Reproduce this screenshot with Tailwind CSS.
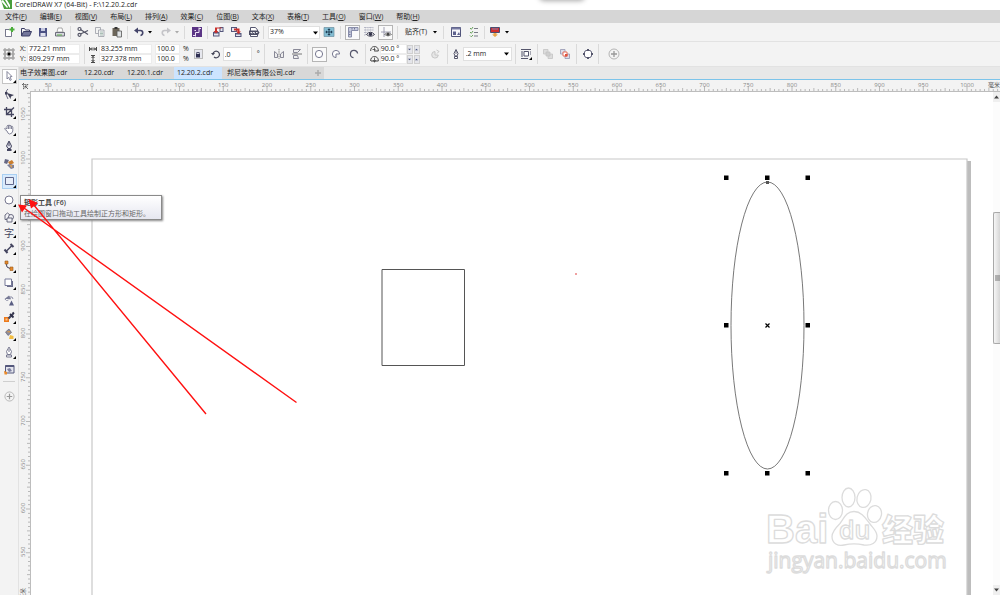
<!DOCTYPE html>
<html lang="zh-CN">
<head>
    <meta charset="UTF-8">
    <meta name="viewport" content="width=device-width, initial-scale=1.0">
    <title>CorelDRAW X7 (64-Bit) - F:\12.20.2.cdr</title>
    <script src="https://cdn.jsdelivr.net/npm/@tailwindcss/browser@4"></script>
</head>
<body class="h-screen overflow-hidden flex flex-col relative bg-white text-[7px] leading-[10px] text-[#222] font-['Open_Sans','Noto_Sans_CJK_SC',sans-serif]">

    <!-- Title bar -->
    <header class="h-[10px] shrink-0 flex items-center gap-[3px] overflow-hidden relative">
        <svg class="w-3 h-[10px] shrink-0" viewBox="0 0 12 10"><path fill="#4a9e3c" d="M1 0h11v9H4z"/><path fill="#fff" d="M3 0l5 7-1 1-6-7zM7 0l3 5 0 3-1-1-4-7z"/></svg>
        <h1>CorelDRAW X7 (64-Bit) - F:\12.20.2.cdr</h1>
        <div class="absolute left-[54%] -top-2 w-11 h-2 rounded shadow-[0_0_5px_1px_#aaa]"></div>
    </header>

    <!-- Menu bar -->
    <nav class="h-[13px] shrink-0 flex items-center gap-[13px] pl-[5px] bg-[#d6d6d6] whitespace-nowrap">
        <button>文件(<u>F</u>)</button>
        <button>编辑(<u>E</u>)</button>
        <button>视图(<u>V</u>)</button>
        <button>布局(<u>L</u>)</button>
        <button>排列(<u>A</u>)</button>
        <button>效果(<u>C</u>)</button>
        <button>位图(<u>B</u>)</button>
        <button>文本(<u>X</u>)</button>
        <button>表格(<u>T</u>)</button>
        <button>工具(<u>O</u>)</button>
        <button>窗口(<u>W</u>)</button>
        <button>帮助(<u>H</u>)</button>
    </nav>

    <!-- Standard toolbar -->
    <div class="h-[19px] shrink-0 flex items-center bg-[#f3f3f3] border-b border-[#e2e2e2]">
        <button aria-label="新建" class="w-[17px] flex justify-center"><svg class="size-3" viewBox="0 0 12 12"><path d="M2.500 3.500h4M2.500 3v7.500h6V6" fill="#fff" stroke="#77788c"/><path d="M9 1v5M6.500 3.500h5" stroke="#4cae3a" stroke-width="2"/></svg></button>
        <button aria-label="打开" class="w-[17px] flex justify-center"><svg class="size-3" viewBox="0 0 12 12"><path d="M1.500 10V2.500h3l1 1.500h4v1.500" fill="none" stroke="#3c3e66"/><path d="M3.500 5.500h8L9.500 10h-8z" fill="#74779b" stroke="#3c3e66"/></svg></button>
        <button aria-label="保存" class="w-[17px] flex justify-center"><svg class="size-3" viewBox="0 0 12 12"><path d="M2 2h8v8.500H2z" fill="#4b5184"/><path d="M4 2h4v3H4z" fill="#c5c9e0"/><path d="M3.500 7h5v3h-5z" fill="#dfe1ee"/></svg></button>
        <button aria-label="打印" class="w-[17px] flex justify-center"><svg class="size-3" viewBox="0 0 12 12"><path d="M4 2h4l1 4H3z" fill="#fff" stroke="#888" stroke-width=".7"/><path d="M1.500 6.500h9v3.500h-9z" fill="#d5d6dc" stroke="#606170" stroke-width=".9"/><path d="M3 9h5" stroke="#5cb04a"/></svg></button>
        <div class="w-px h-[13px] ml-[2px] mr-[3px] bg-[#dadada]"></div>
        <button aria-label="剪切" class="w-[17px] flex justify-center"><svg class="size-3" viewBox="0 0 12 12"><g fill="none" stroke="#555667" stroke-width="1.200"><path d="M3.500 8l7.500-3.500M3.500 3.500l7.500 5"/><circle cx="2.500" cy="3" r="1.500"/><circle cx="2.500" cy="8.800" r="1.500"/></g></svg></button>
        <button aria-label="复制" class="w-[17px] flex justify-center"><svg class="size-3" viewBox="0 0 12 12"><g fill="#f2f3f3" stroke="#9a9da6" stroke-width=".8"><path d="M1.500 1.500h5v6h-5z"/><path d="M4.500 4h5.500v6.500H4.500z"/></g><path d="M6 6h3M6 7.500h3M6 9h3" stroke="#8ba79b" stroke-width=".7"/></svg></button>
        <button aria-label="粘贴" class="w-[17px] flex justify-center"><svg class="size-3" viewBox="0 0 12 12"><path d="M1.500 2h7v8h-7z" fill="#6c6559"/><path d="M3.500 1h3v2h-3z" fill="#333"/><path d="M6 5h4.500v6H6z" fill="#e0e3e5" stroke="#555" stroke-width=".8"/></svg></button>
        <div class="w-px h-[13px] mx-[2px] bg-[#dadada]"></div>
        <button aria-label="撤消" class="w-[17px] flex justify-center"><svg class="size-3" viewBox="0 0 12 12"><path d="M1 4.500L5 1.500v6z" fill="#44456a"/><path d="M4 4.500h3.500c3 0 3 4.500 0 5" fill="none" stroke="#44456a" stroke-width="1.600"/></svg></button>
        <button aria-label="撤消列表" class="w-[6px] flex justify-center"><svg class="w-1 h-1" viewBox="0 0 4 4"><path d="M0 1h4L2 3.500z"/></svg></button>
        <button aria-label="重做" class="w-[17px] ml-[4px] flex justify-center"><svg class="size-3" viewBox="0 0 12 12"><path d="M11 4.500L7 1.500v6z" fill="#c4c4c8"/><path d="M8 4.500H4.500c-3 0-3 4.500 0 5" fill="none" stroke="#c4c4c8" stroke-width="1.600"/></svg></button>
        <button aria-label="重做列表" class="w-[6px] flex justify-center"><svg class="w-1 h-1" viewBox="0 0 4 4"><path fill="#aaa" d="M0 1h4L2 3.500z"/></svg></button>
        <div class="w-px h-[13px] ml-[4px] mr-[3px] bg-[#dadada]"></div>
        <button aria-label="搜索内容" class="w-[17px] flex justify-center"><svg class="size-3" viewBox="0 0 12 12"><path d="M1 1h10v10H1z" fill="#5b3585"/><path d="M8 1.500v5H4.500V10.500M8 2.500h2M4 9.500H2M5 4.500H3.500" fill="none" stroke="#eee4f6"/></svg></button>
        <div class="w-px h-[13px] ml-[2px] mr-px bg-[#dadada]"></div>
        <button aria-label="导入" class="w-[18px] flex justify-center"><svg class="size-3" viewBox="0 0 12 12"><path d="M1 6h6.500v4.500H1zM7.500 1h4v5h-4z" fill="#55577b"/><path d="M2 7.500h4.500v2H2zM8.500 2h2v3h-2z" fill="#e6e6ef"/><path d="M9.500 2.500H5V5H6.500L4 7.500 1.500 5H3V1.500h6.500z" fill="#c9302c"/></svg></button>
        <button aria-label="导出" class="w-[18px] flex justify-center"><svg class="size-3" viewBox="0 0 12 12"><path d="M1 1h6v5H1zM5 7h6.500v4H5z" fill="#55577b"/><path d="M2 2h4v3H2zM6 8.500h4.500V10H6z" fill="#e6e6ef"/><path d="M4 2.500h5.500V5.500H11L8.500 8 6 5.500h1.500v-1H4z" fill="#c9302c"/></svg></button>
        <button aria-label="发布为 PDF" class="w-[18px] flex justify-center"><svg class="size-3" viewBox="0 0 12 12"><path d="M2.500 1.500h5l2 2.500v6.500h-7z" fill="#fff" stroke="#55566f"/><path d="M1 4.500h9l1.500 2L10 9H1z" fill="#4c4d63"/><path d="M2.500 6.500h1.500v1M5 6.500h1.500v1M8 6.500h1.500" stroke="#fff" stroke-width=".9" fill="none"/></svg></button>
        <div class="w-px h-[13px] mr-[4px] bg-[#dadada]"></div>
        <div class="relative w-[52px]">
            <select aria-label="缩放级别" class="block w-full h-[13px] pl-px appearance-none bg-white border border-[#e0e0e0]"><option>37%</option></select>
            <svg class="absolute right-[2px] top-[5px] w-[5px] h-1 pointer-events-none" viewBox="0 0 5 4"><path d="M0 .5h5L2.500 3.500z"/></svg>
        </div>
        <button aria-label="全屏预览" class="w-[18px] flex justify-center"><svg class="size-3" viewBox="0 0 12 12"><path d="M1 1.500h10v9H1z" fill="#83bdd3" stroke="#6d8f9f" stroke-width=".7"/><path d="M6 2.500v7M2.500 6h7M4.800 3.500h2.400M4.800 8.500h2.400M3.500 4.800v2.400M8.500 4.800v2.400" stroke="#1f3f55"/></svg></button>
        <div class="w-px h-[13px] ml-[2px] mr-[4px] bg-[#dadada]"></div>
        <button aria-label="显示标尺" class="w-[15px] h-[15px] flex items-center justify-center bg-[#fafafa] border border-[#b5b5b5]"><svg class="size-3 shrink-0" viewBox="0 0 12 12"><path d="M1.500 1.500h9.500v3H4.500V11h-3z" fill="#c6cadd" stroke="#7e83a3" stroke-width=".9"/><path d="M5 2v1.500M7.500 2v1.500M2 6h1.500M2 8.500h1.500" stroke="#4f5378" stroke-width=".7"/></svg></button>
        <button aria-label="显示网格" class="w-[18px] flex justify-center"><svg class="size-3" viewBox="0 0 12 12"><path d="M1 1.500h9M1 4h9M1 6.500h5M1 9h2M2.500 1v8M5 1v5M7.500 1v4M10 1v4" stroke="#9ea0b5" stroke-width=".7" stroke-dasharray="1 .7"/><path d="M3.500 8.500Q7.500 4 11.500 8.500 7.500 12 3.500 8.500z" fill="#fff" stroke="#3d3e50"/><circle cx="7.500" cy="8.200" r="1.700" fill="#33344a"/></svg></button>
        <button aria-label="显示辅助线" class="w-[15px] h-[15px] flex items-center justify-center bg-[#fafafa] border border-[#b5b5b5]"><svg class="size-3 shrink-0" viewBox="0 0 12 12"><path d="M4 1v10M1 6h10" stroke="#8a8ca2" stroke-width=".8"/><path d="M4.500 8.500Q8 5 11.500 8.500 8 11.500 4.500 8.500z" fill="#fff" stroke="#666" stroke-width=".8"/><circle cx="8" cy="8.300" r="1.500" fill="#444"/></svg></button>
        <div class="w-px h-[13px] ml-[4px] mr-[7px] bg-[#dadada]"></div>
        <button class="flex items-center gap-[6px] whitespace-nowrap">贴齐(T)<svg class="w-1 h-1" viewBox="0 0 4 4"><path d="M0 1h4L2 3.500z"/></svg></button>
        <div class="w-px h-[13px] ml-[6px] mr-[3px] bg-[#dadada]"></div>
        <button aria-label="选项" class="w-[18px] flex justify-center"><svg class="size-3" viewBox="0 0 12 12"><path d="M1.500 1.500h9v9h-9z" fill="#f6f6fb" stroke="#51547a"/><path d="M1.500 1.500h9v2h-9z" fill="#777aa2"/><path d="M3 9V5.500h3V9zM7 9l2-3 1 3z" fill="#5d618d"/></svg></button>
        <button aria-label="应用程序启动器" class="w-[18px] flex justify-center"><svg class="size-3" viewBox="0 0 12 12"><path d="M6 2.500h4M6 6.500h4M6 10h4" stroke="#7b7d88" stroke-width="1.200"/><path d="M2 2l1.300 1.300L5 1M2 6l1.300 1.300L5 5M2 9.500l1.300 1.300L5 9" fill="none" stroke="#69a15c"/></svg></button>
        <div class="w-px h-[13px] ml-[1px] mr-[2px] bg-[#dadada]"></div>
        <button aria-label="启动" class="w-[17px] flex justify-center"><svg class="size-3" viewBox="0 0 12 12"><path d="M1.500 1.500h9v5h-9z" fill="#d02c2c" stroke="#4c4d70"/><path d="M3 3h6" stroke="#8186b4"/><path d="M4.500 7h3v1.500h1.500L6 11 3 8.500h1.500z" fill="#e9a64b"/></svg></button>
        <button aria-label="启动列表" class="w-[7px] flex justify-center"><svg class="w-1 h-1" viewBox="0 0 4 4"><path d="M0 1h4L2 3.500z"/></svg></button>
    </div>

    <!-- Property bar -->
    <div class="h-[25px] shrink-0 flex items-center bg-[#f3f3f3] border-b border-[#e2e2e2]">
        <button aria-label="对象原点" class="w-[17px] flex justify-center"><svg class="size-3" viewBox="0 0 12 12"><path d="M2 2h8v8H2z" fill="none" stroke="#999" stroke-width=".7"/><g fill="#fff" stroke="#777" stroke-width=".8"><path d="M1 1h2v2H1zM5 1h2v2H5zM9 1h2v2H9zM1 5h2v2H1zM9 5h2v2H9zM1 9h2v2H1zM5 9h2v2H5zM9 9h2v2H9z"/></g><path d="M4.500 4.500h3v3h-3z"/></svg></button>
        <div class="ml-[3px] grid">
            <label class="flex items-center gap-[1px]">X:<input value="772.21 mm" class="w-[53px] h-[10px] pl-[1px] bg-white border border-[#ececec]"></label>
            <label class="flex items-center gap-[1px]">Y:<input value="809.297 mm" class="w-[53px] h-[10px] pl-[1px] bg-white border border-[#ececec]"></label>
        </div>
        <div class="w-px h-5 mx-[4px] bg-[#dadada]"></div>
        <div class="grid">
            <label class="flex items-center gap-[2px]"><svg class="w-2 h-[8px]" viewBox="0 0 8 8"><path d="M.5 2v4M7.500 2v4M1 4h6M3 2.500L1.500 4 3 5.500M5 2.500L6.500 4 5 5.500" stroke="#333" fill="none" stroke-width=".9"/></svg><input aria-label="宽度" value="83.255 mm" class="w-[53px] h-[10px] pl-[1px] bg-white border border-[#ececec]"></label>
            <label class="flex items-center gap-[2px]"><svg class="w-2 h-[8px]" viewBox="0 0 8 8"><path d="M2 .5h4M2 7.500h4M4 1v6M2.500 3L4 1.500 5.500 3M2.500 5L4 6.500 5.500 5" stroke="#333" fill="none" stroke-width=".9"/></svg><input aria-label="高度" value="327.378 mm" class="w-[53px] h-[10px] pl-[1px] bg-white border border-[#ececec]"></label>
        </div>
        <div class="ml-[3px] grid">
            <label class="flex items-center gap-[3px]"><input aria-label="水平缩放" value="100.0" class="w-[25px] h-[10px] pl-[1px] bg-white border border-[#ececec]">%</label>
            <label class="flex items-center gap-[3px]"><input aria-label="垂直缩放" value="100.0" class="w-[25px] h-[10px] pl-[1px] bg-white border border-[#ececec]">%</label>
        </div>
        <button aria-label="锁定比率" class="ml-[5px] w-[9px] h-[10px] flex items-center justify-center bg-[#e6e7ee] border border-[#bbb]"><svg class="w-[6px] h-[7px] shrink-0" viewBox="0 0 6 7"><path d="M1 3h4v3.500H1z" fill="#2f3052"/><path d="M1.700 3V1.500h2.600V3" fill="none" stroke="#2f3052" stroke-width=".8"/></svg></button>
        <label class="ml-[8px] flex items-center gap-[2px]">
            <svg class="size-[10px]" viewBox="0 0 10 10"><path d="M2 4.500a3.300 3.300 0 1 1 1 3.500" fill="none" stroke="#444558" stroke-width="1.200"/><path d="M0 4h4L2 6.500z" fill="#444558"/></svg>
            <input aria-label="旋转角度" value=".0" class="w-[29px] h-[14px] pl-[1px] bg-white border border-[#e0e0e0]">
            <span class="pl-[3px]">°</span>
        </label>
        <div class="w-px h-5 ml-[4px] mr-[5px] bg-[#dadada]"></div>
        <button aria-label="水平镜像" class="w-[18px] flex justify-center"><svg class="size-3" viewBox="0 0 12 12"><path d="M6 1v10" stroke="#888" stroke-dasharray="1.500 .7"/><path d="M1.500 9.500V3.500l3 2.500v3.500zM10.500 9.500V3.500l-3 2.500v3.500z" fill="#eee" stroke="#6e6f80" stroke-width=".8"/></svg></button>
        <button aria-label="垂直镜像" class="w-[18px] flex justify-center"><svg class="size-3" viewBox="0 0 12 12"><path d="M1 6h10" stroke="#777"/><path d="M2.500 1.500h7l-3 3h-4zM2.500 10.500h5l-1-3h-4z" fill="#eee" stroke="#6e6f80" stroke-width=".8"/></svg></button>
        <div class="w-px h-5 ml-[1px] mr-[4px] bg-[#dadada]"></div>
        <button aria-label="椭圆形" class="w-[15px] h-[15px] flex items-center justify-center bg-[#fafafa] border border-[#b5b5b5]"><svg class="size-[10px]" viewBox="0 0 10 10"><circle cx="5" cy="5" r="3.600" fill="#fff" stroke="#777890"/></svg></button>
        <button aria-label="饼图" class="w-[18px] flex justify-center"><svg class="size-[10px]" viewBox="0 0 10 10"><path d="M5 5h3.600A3.600 3.600 0 1 0 5 8.600z" fill="#fff" stroke="#777890"/></svg></button>
        <button aria-label="弧" class="w-[18px] flex justify-center"><svg class="size-[10px]" viewBox="0 0 10 10"><path d="M8.600 4.500A3.600 3.600 0 1 0 4.500 8.600" fill="none" stroke="#55566c" stroke-width="1.200"/></svg></button>
        <div class="w-px h-5 ml-[2px] mr-[4px] bg-[#dadada]"></div>
        <div class="grid">
            <label class="flex items-center gap-[1px]"><svg class="w-[9px] h-[8px]" viewBox="0 0 9 8"><path d="M.7 6c-.5-6 8-6 7.600 0H5" fill="none" stroke="#444"/><path d="M4.500 2.500v4M2.500 4.500h3" stroke="#444" stroke-width=".8"/></svg><input aria-label="起始角度" value="90.0 °" class="w-[27px] h-[10px] bg-white border border-[#ececec]"></label>
            <label class="flex items-center gap-[1px]"><svg class="w-[9px] h-[8px]" viewBox="0 0 9 8"><path d="M.7 6c-.5-6 8-6 7.600 0H1" fill="none" stroke="#444"/><path d="M4.500 2.500v5M3 5l1.500 2L6 5" stroke="#444" stroke-width=".8" fill="none"/></svg><input aria-label="结束角度" value="90.0 °" class="w-[27px] h-[10px] bg-white border border-[#ececec]"></label>
        </div>
        <div class="grid grid-cols-2 gap-px">
            <button aria-label="减小起始角度" class="w-[6px] h-[9px] flex items-center justify-center bg-[#e4e5ea] border border-[#d0d0d0]"><svg class="w-[3px] h-[3px]" viewBox="0 0 4 4"><path fill="#44507c" d="M0 1h4L2 3z"/></svg></button>
            <button aria-label="增大起始角度" class="w-[6px] h-[9px] flex items-center justify-center bg-[#e4e5ea] border border-[#d0d0d0]"><svg class="w-[3px] h-[3px]" viewBox="0 0 4 4"><path fill="#44507c" d="M0 3h4L2 1z"/></svg></button>
            <button aria-label="减小结束角度" class="w-[6px] h-[9px] flex items-center justify-center bg-[#e4e5ea] border border-[#d0d0d0]"><svg class="w-[3px] h-[3px]" viewBox="0 0 4 4"><path fill="#44507c" d="M0 1h4L2 3z"/></svg></button>
            <button aria-label="增大结束角度" class="w-[6px] h-[9px] flex items-center justify-center bg-[#e4e5ea] border border-[#d0d0d0]"><svg class="w-[3px] h-[3px]" viewBox="0 0 4 4"><path fill="#44507c" d="M0 3h4L2 1z"/></svg></button>
        </div>
        <button aria-label="更改方向" class="ml-[6px] w-[18px] flex justify-center"><svg class="size-[10px]" viewBox="0 0 10 10"><path d="M5 2.500A3.300 3.300 0 1 0 8.300 6H5z" fill="#e6e6e6" stroke="#c6c6c6"/><path d="M6.500 1l2.500 1.500L7 4.500" fill="none" stroke="#c6c6c6"/></svg></button>
        <div class="w-px h-5 mx-[3px] bg-[#dadada]"></div>
        <label class="flex items-center gap-[2px] relative">
            <svg class="size-[10px]" viewBox="0 0 10 10"><path d="M5 .5L3 4.500 4 7h2l1-2.500zM3.500 7.500h3v2h-3z" fill="#fff" stroke="#44455c" stroke-width=".9"/><path d="M5 2v3" stroke="#44455c" stroke-width=".8"/></svg>
            <select aria-label="轮廓宽度" class="w-[49px] h-[14px] pl-[2px] appearance-none bg-white border border-[#e0e0e0]"><option>.2 mm</option></select>
            <svg class="absolute right-[3px] top-[5px] w-[5px] h-1 pointer-events-none" viewBox="0 0 5 4"><path d="M0 .5h5L2.500 3.500z"/></svg>
        </label>
        <div class="w-px h-5 ml-[3px] mr-[2px] bg-[#dadada]"></div>
        <button aria-label="文本换行" class="w-[17px] flex justify-center"><svg class="size-3" viewBox="0 0 12 12"><path d="M1 1.500h10M1 4h2M1 6h2M1 8h2M1 10.500h7M10 4h1M10 6h1" stroke="#55566c"/><path d="M4 3.500h4.500v4.500H4z" fill="#fff" stroke="#55566c"/><path d="M12 9v3H9z"/></svg></button>
        <div class="w-px h-5 ml-[2px] mr-px bg-[#dadada]"></div>
        <button aria-label="到图层前面" class="w-[18px] flex justify-center"><svg class="size-3" viewBox="0 0 12 12"><g fill="#dcdcdc" stroke="#c4c4c4" stroke-width=".8"><path d="M1.500 1.500h4.500v4.500H1.500zM6 6h4.500v4.500H6z"/><path fill="#cfcfcf" d="M4 4h4v4H4z"/></g></svg></button>
        <button aria-label="到图层后面" class="w-[17px] flex justify-center"><svg class="size-3" viewBox="0 0 12 12"><g fill="#dcdde9" stroke="#9496b0" stroke-width=".8"><path d="M1.500 1.500h4.500v4.500H1.500zM6 6h4.500v4.500H6z"/><path fill="#fff" stroke="#e2513b" d="M4 4h4v4H4z"/></g><path d="M6 6h2.500v2.500H6z" fill="#e2513b"/></svg></button>
        <div class="w-px h-5 mx-[2px] bg-[#dadada]"></div>
        <button aria-label="转换为曲线" class="w-[18px] flex justify-center"><svg class="size-3" viewBox="0 0 12 12"><circle cx="6" cy="6" r="4" fill="#fff" stroke="#66677e"/><path d="M5 1h2v2H5zM5 9h2v2H5zM1 5h2v2H1zM9 5h2v2H9z" fill="#55566c"/></svg></button>
        <div class="w-px h-5 ml-[1px] mr-[6px] bg-[#dadada]"></div>
        <button aria-label="快速自定义" class="w-[18px] flex justify-center"><svg class="size-3" viewBox="0 0 12 12"><circle cx="6" cy="6" r="5" fill="none" stroke="#b5b5b5"/><path d="M6 3v6M3 6h6" stroke="#999" stroke-width="1.300"/></svg></button>
    </div>

    <div class="flex-1 min-h-0 flex">
        <!-- Toolbox -->
        <aside class="w-[19px] shrink-0 bg-[#f3f3f3] border-r border-[#e2e2e2]">
            <div class="h-[311px] grid place-items-center">
                <button aria-label="选择工具" class="w-[15px] h-[15px] flex items-center justify-center bg-white border border-[#c4c4c4]"><svg class="size-[13px] shrink-0" viewBox="0 0 13 13"><path d="M4 1.500l5 5-2 .3 1.300 3-1.300.6-1.300-3L4 9z" fill="#fff" stroke="#777890" stroke-width=".9"/><path d="M13 10v3h-3z"/></svg></button>
                <button aria-label="形状工具" class="w-[15px] flex justify-center"><svg class="size-[13px]" viewBox="0 0 13 13"><path d="M5 1Q1 4 5 11" fill="none" stroke="#666780"/><path d="M4 5l7 2-3 1.500L7.500 11z" fill="#3f4058"/><path d="M2 4h2.500v2.500H2z" fill="#3f4058"/><path d="M13 10v3h-3z"/></svg></button>
                <button aria-label="裁剪工具" class="w-[15px] flex justify-center"><svg class="size-[13px]" viewBox="0 0 13 13"><path d="M3.500 1v7.500H11M1 3.500h7.500V11M3.500 8.500L11 1.500" fill="none" stroke="#44455f" stroke-width="1.300"/><path d="M13 10v3h-3z"/></svg></button>
                <button aria-label="平移工具" class="w-[15px] flex justify-center"><svg class="size-[13px]" viewBox="0 0 13 13"><path d="M4 8L1.500 6l1-1L4 6V3q.7-1.500 1.300 0Q6 .7 7 3q1-1.500 1.400.5 1.400-.6 1.400 1V8Q9 11 6.500 11 5 11 4 8zM5.500 3v3M7 3v3M8.500 3.500V6" fill="#fff" stroke="#666780" stroke-width=".8"/><path d="M13 10v3h-3z"/></svg></button>
                <button aria-label="钢笔工具" class="w-[15px] flex justify-center"><svg class="size-[13px]" viewBox="0 0 13 13"><path d="M6 1L3.500 6 5 8.500h2.500L8.500 6zM6 2v4" fill="#dfe0ea" stroke="#44455f"/><path d="M4 9h4.500v2H4z" fill="#44455f"/><path d="M13 10v3h-3z"/></svg></button>
                <button aria-label="智能填充工具" class="w-[15px] flex justify-center"><svg class="size-[13px]" viewBox="0 0 13 13"><path d="M2 2l4 1-2 4-3-1z" fill="#676985"/><path d="M5 5l4-2 2 3-4 2z" fill="#c97d2e"/><path d="M4 8l3-1 4 1v3l-3 1z" fill="#7d7f98"/><path d="M6.500 8l3 .5-1 2.500z" fill="#e4a14e"/></svg></button>
                <button aria-label="矩形工具" class="w-[15px] h-[15px] flex items-center justify-center bg-[#d8eafc] border border-[#a9cff2]"><svg class="size-[13px] shrink-0" viewBox="0 0 13 13"><path d="M2.500 2.500h8v7h-8z" fill="#e8eef8" stroke="#5f668c"/><path d="M13 10v3h-3z"/></svg></button>
                <button aria-label="椭圆形工具" class="w-[15px] flex justify-center"><svg class="size-[13px]" viewBox="0 0 13 13"><circle cx="6" cy="6" r="4" fill="#fff" stroke="#777890"/><path d="M13 10v3h-3z"/></svg></button>
                <button aria-label="多边形工具" class="w-[15px] flex justify-center"><svg class="size-[13px]" viewBox="0 0 13 13"><g fill="#f2f2f6" stroke="#5c5d75" stroke-width=".9"><path d="M2 8.500V4l2.500-2L7 4v4.500z"/><circle cx="8" cy="6" r="2.500"/><path d="M4 7h5v4H4z"/></g><path d="M13 10v3h-3z"/></svg></button>
                <button aria-label="文本工具" class="w-[15px] flex justify-center text-[10px] text-[#44455f] relative">字<svg class="absolute right-px bottom-0 w-[3px] h-[3px]" viewBox="0 0 3 3"><path fill="#000" d="M3 0v3H0z"/></svg></button>
                <button aria-label="平行度量工具" class="w-[15px] flex justify-center"><svg class="size-[13px]" viewBox="0 0 13 13"><path d="M3 9.500L9 3.500" stroke="#44455f" stroke-width="1.500"/><path d="M1.500 7.500l3 3.500M7.500 2l3 3" stroke="#44455f" stroke-width="2"/><path d="M13 10v3h-3z"/></svg></button>
                <button aria-label="直线连接器工具" class="w-[15px] flex justify-center"><svg class="size-[13px]" viewBox="0 0 13 13"><path d="M3 3l1 4 4 2" fill="none" stroke="#44455f"/><path d="M2 1h3v3H2zM7 7h3v3.500H7z" fill="#e58a2b" stroke="#98591b" stroke-width=".6"/><path d="M13 10v3h-3z"/></svg></button>
                <button aria-label="阴影工具" class="w-[15px] flex justify-center"><svg class="size-[13px]" viewBox="0 0 13 13"><path d="M4 4h6v6H4z" fill="#6a6c8a"/><path d="M2 2h6.500v6.500H2z" fill="#fff" stroke="#777a99"/><path d="M13 10v3h-3z"/></svg></button>
                <button aria-label="透明度工具" class="w-[15px] flex justify-center"><svg class="size-[13px]" viewBox="0 0 13 13"><path d="M1.500 5L6 1.500 8 5 4 7z" fill="#777a95"/><path d="M3 5.500l4 .5" stroke="#fff"/><path d="M8.500 6.500l2.500 5H6z" fill="#5a5e83"/><path d="M6 3q4-1 4 2" fill="none" stroke="#8b8da5"/></svg></button>
                <button aria-label="颜色滴管工具" class="w-[15px] flex justify-center"><svg class="size-[13px]" viewBox="0 0 13 13"><path d="M1 6h5v5H1z" fill="#ec7a1c"/><path d="M2.500 7.500h2v2h-2z" fill="#f9c58f"/><path d="M5.500 7.500L10 3" stroke="#44455f" stroke-width="2.200"/><path d="M7 3l3.500 3.500M9.500 1.500l1.500 1.500" stroke="#2e2f48" stroke-width="1.800"/><path d="M13 10v3h-3z"/></svg></button>
                <button aria-label="交互式填充工具" class="w-[15px] flex justify-center"><svg class="size-[13px]" viewBox="0 0 13 13"><path d="M2.500 4L6 1l2.500 3.500L5 7.500z" fill="#8b8da0" stroke="#55566c" stroke-width=".6"/><path d="M3 4l3.500-1 1 1.500z" fill="#e99a36"/><path d="M7 7l3.500 1v3H6z" fill="#f2bd42"/><path d="M13 10v3h-3z"/></svg></button>
                <button aria-label="轮廓笔" class="w-[15px] flex justify-center"><svg class="size-[13px]" viewBox="0 0 13 13"><path d="M6 1L3.500 5.500 4.500 8.500h3l1-3zM6 3v3M3.500 9h5v2h-5z" fill="#fff" stroke="#777890"/><path d="M13 10v3h-3z"/></svg></button>
                <button aria-label="编辑填充" class="w-[15px] flex justify-center"><svg class="size-[13px]" viewBox="0 0 13 13"><path d="M2.500 2.500h8.500v7.500H2.500z" fill="#e4e5ee" stroke="#55587c"/><path d="M2.500 2.500h8.500v1.500H2.500z" fill="#55587c"/><path d="M4 6l3-1 2 3-3 1z" fill="#7d80a0"/><path d="M1 8l3 1v2.500H1.500z" fill="#ec8b2b"/></svg></button>
            </div>
            <hr class="mx-[3px] mt-[3px] mb-[9px] border-[#cfcfcf]">
            <button aria-label="自定义工具箱" class="w-[18px] flex justify-center"><svg class="size-[11px]" viewBox="0 0 12 12"><circle cx="6" cy="6" r="5" fill="none" stroke="#b5b5b5"/><path d="M6 3v6M3 6h6" stroke="#999" stroke-width="1.300"/></svg></button>
        </aside>

        <main class="flex-1 min-w-0 flex flex-col">
            <!-- Document tabs -->
            <div class="h-[13px] shrink-0 flex items-stretch bg-[#e8e8e8] border-b border-[#7cc4ea] whitespace-nowrap">
                <div class="flex items-stretch bg-[#d8d8d8]">
                    <button class="w-[64px] pl-px text-left">电子效果图.cdr</button>
                    <button class="w-[43px] pl-px text-left">12.20.cdr</button>
                    <button class="w-[48px] pl-px text-left">12.20.1.cdr</button>
                    <button class="w-[48px] pl-[3px] text-left bg-[#cce4ff]">12.20.2.cdr</button>
                    <button class="w-[90px] pl-[5px] text-left">邦尼装饰有限公司.cdr</button>
                </div>
                <button aria-label="新建文档" class="w-3 flex items-center justify-center bg-[#d8d8d8]"><svg class="w-2 h-2" viewBox="0 0 8 8"><path d="M4 1v6M1 4h6" stroke="#aaa" stroke-width="1.500"/></svg></button>
            </div>

            <!-- Horizontal ruler -->
            <div class="h-3 shrink-0 flex bg-[#f3f3f3]">
                <svg class="w-[11px] h-3 shrink-0" viewBox="0 0 11 12"><path d="M4.500 3v7M3 4.500h7" stroke="#555" stroke-width=".9" stroke-dasharray="1.500 .8"/><path d="M6 6l3 3M6 8.500V6h2.500" fill="none" stroke="#444" stroke-width=".8"/></svg>
                <svg id="rulerX" class="flex-1 min-w-0 h-3 border-b border-[#bdbdbd]"></svg>
            </div>

            <div class="flex-1 min-h-0 flex">
                <svg id="rulerY" class="w-3 h-full shrink-0 bg-[#f3f3f3] border-r border-[#bdbdbd]"></svg>

                <!-- Drawing window, origin at 31,92 -->
                <svg class="flex-1 min-w-0 h-full">
                    <g transform="translate(-31 -92)">
                        <path d="M967 161h4v500h-4z" fill="#bdbdbd"/>
                        <path d="M92 700V159h875v541" fill="#fff" stroke="#c8c8c8" stroke-width="1.200"/>
                        <path d="M382 269.500h82.500v96H382z" fill="none" stroke="#555"/>
                        <ellipse cx="767.500" cy="325.500" rx="36.500" ry="143.500" fill="none" stroke="#555" stroke-width=".8"/>
                        <path d="M766 181h3v3h-3z" fill="#555"/>
                        <path d="M724 175.500h4.500v4.500H724zM765 175.500h4.500v4.500H765zM805.500 175.500h4.500v4.500h-4.500zM724 323h4.500v4.500H724zM805.500 323h4.500v4.500h-4.500zM724 471h4.500v4.500H724zM765 471h4.500v4.500H765zM805.500 471h4.500v4.500h-4.500z"/>
                        <path d="M765.500 323.500l4 4M769.500 323.500l-4 4" stroke="#000" stroke-width="1.200"/>
                        <path d="M575 273h2v2h-2z" fill="#f0a0a0"/>

                        <!-- Watermark -->
                        <g fill="#fff" stroke="#dcdcdc" stroke-width="1.300" stroke-linejoin="round">
                            <ellipse cx="835.500" cy="510.500" rx="7" ry="9"/>
                            <ellipse cx="848.500" cy="497.500" rx="6.500" ry="9.500"/>
                            <ellipse cx="864" cy="498.500" rx="7" ry="9" transform="rotate(12 864 498.500)"/>
                            <ellipse cx="874.500" cy="514" rx="7" ry="8.500" transform="rotate(10 874.500 514)"/>
                            <path d="M854 511.500c-8 0-10 7-14 12-4 4-8 8-8 13 0 7 6 10 12 8.500 7-1.500 13-1.500 20 0 7 1 13-2 13-9 0-5-4-8-7-12-4-5-8-12.500-16-12.500z"/>
                            <text x="766" y="543" font-size="40" font-weight="700" font-family="Liberation Sans, sans-serif">Bai</text>
                            <text x="839" y="539" font-size="25" font-weight="600" font-family="Open Sans, sans-serif">du</text>
                            <text x="882" y="541" font-size="31" font-weight="900" font-family="Noto Sans CJK SC, sans-serif">经验</text>
                            <text x="768" y="568" font-size="21" font-weight="400" font-family="Open Sans, sans-serif">jingyan.baidu.com</text>
                        </g>
                    </g>
                </svg>

                <!-- Vertical scrollbar -->
                <div class="w-[7px] shrink-0 flex flex-col bg-[#fcfcfc]">
                    <button aria-label="向上滚动" class="h-[10px] flex items-center justify-center bg-[#efefef]"><svg class="w-[5px] h-1" viewBox="0 0 5 4"><path fill="#444" d="M0 3.500h5L2.500 .5z"/></svg></button>
                    <div class="grow-[110] basis-0"></div>
                    <div class="grow-[130] basis-0 flex items-center justify-center border border-r-0 border-[#a9a9a9] rounded-l-xs bg-linear-to-r from-[#f6f6f6] to-[#d6d6d6]"><svg class="w-[5px] h-[6px]" viewBox="0 0 5 6"><path d="M0 1h5M0 3h5M0 5h5" stroke="#777"/></svg></div>
                    <div class="grow-[242] basis-0"></div>
                    <button aria-label="向下滚动" class="h-[10px] flex items-center justify-center bg-[#efefef]"><svg class="w-[5px] h-1" viewBox="0 0 5 4"><path fill="#444" d="M0 .5h5L2.500 3.500z"/></svg></button>
                </div>
            </div>
        </main>
    </div>

    <!-- Tooltip of the rectangle tool -->
    <div role="tooltip" class="absolute left-[20px] top-[195px] w-[142px] h-[25px] px-[3px] py-px flex flex-col bg-linear-to-b from-white to-[#e6e7f0] border border-[#8a8a8a] shadow-[1px_1px_2px_#888] whitespace-nowrap">
        <strong class="font-semibold text-[#444] leading-[11px]">矩形工具 (F6)</strong>
        <span class="text-[#666] leading-[11px]">在绘图窗口拖动工具绘制正方形和矩形。</span>
    </div>

    <!-- Pointer arrows -->
    <svg class="absolute left-0 top-0 w-[310px] h-[430px] pointer-events-none">
        <path d="M206 414L33 204M296.500 402.500L24 208" stroke="#f11" stroke-width="1.400"/>
        <path d="M28.500 199l9.500 4-7 5.500zM18 204.500l9 1-5 7z" fill="#f11"/>
    </svg>

    <script>
        const SCALE = 0.875; // pixels per millimetre at 37%
        const rulerX = document.getElementById('rulerX');
        const rulerY = document.getElementById('rulerY');

        let marks = '';
        for (let mm = -65; mm <= 2000; mm += 5) {
            const x = 62 + mm * SCALE;
            const len = mm % 50 === 0 ? 5 : mm % 25 === 0 ? 3 : 2;
            marks += `<path d="M${x} ${11 - len}v${len}" stroke="#aaa" stroke-width=".8"/>`;
            if (mm % 50 === 0 && mm <= 1000) {
                marks += `<text x="${x}" y="7" font-size="6" text-anchor="middle" fill="#888">${Math.abs(mm)}</text>`;
            }
        }
        marks += '<text x="958" y="7" font-size="6" fill="#555">毫米</text>';
        rulerX.innerHTML = marks;

        marks = '';
        for (let mm = 1075; mm >= 0; mm -= 5) {
            const y = 67 + (1000 - mm) * SCALE;
            const len = mm % 50 === 0 ? 4 : mm % 25 === 0 ? 3 : 2;
            marks += `<path d="M${11 - len} ${y}h${len}" stroke="#aaa" stroke-width=".8"/>`;
            if (mm % 50 === 0 && mm > 500) {
                marks += `<text transform="translate(6 ${y - 1}) rotate(-90)" font-size="6" text-anchor="middle" fill="#888">${mm}</text>`;
            }
        }
        marks += '<text transform="translate(6 508) rotate(-90)" font-size="6" fill="#555">毫米</text>';
        rulerY.innerHTML = marks;
    </script>
</body>
</html>
